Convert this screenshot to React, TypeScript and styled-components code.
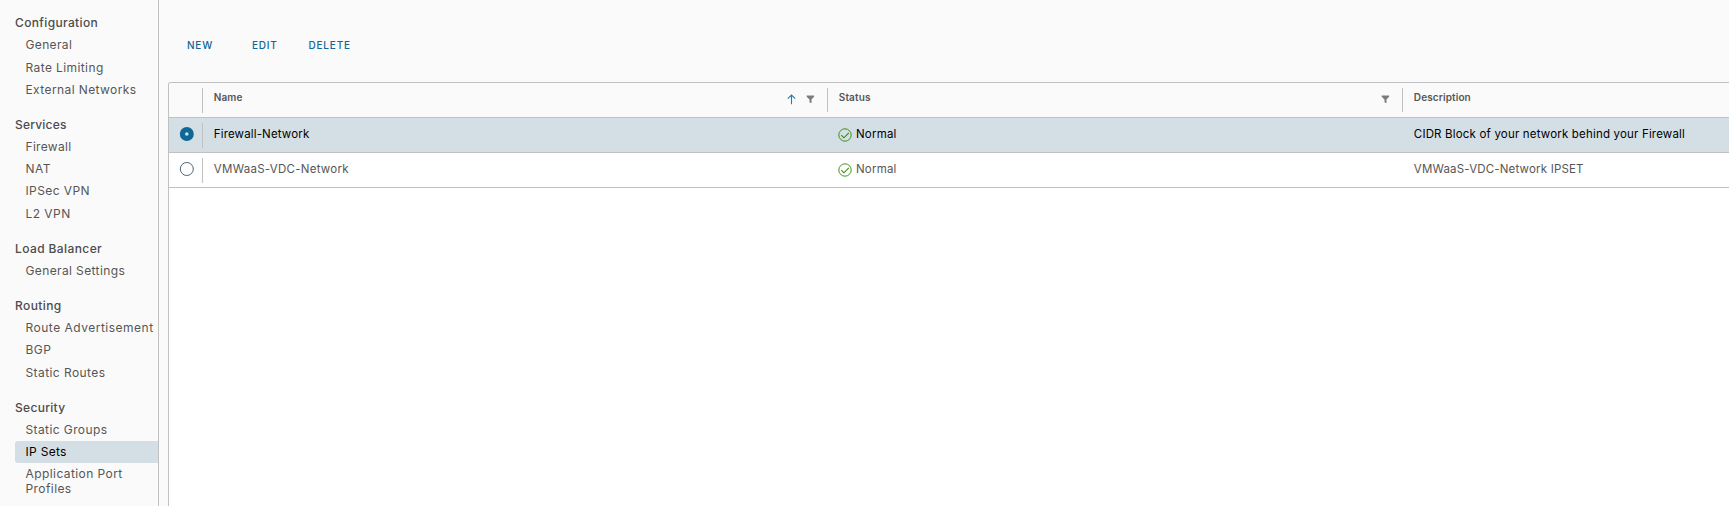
import React from "react";
import styled, { createGlobalStyle } from "styled-components";

const Global = createGlobalStyle`
  * { box-sizing: border-box; }
  body { margin: 0; background: #fafafa; overflow: hidden; }
  body, button { font-family: Inter, "Liberation Sans", sans-serif; }
`;

const Page = styled.div`
  display: flex;
  width: 100%;
  height: 506px;
  overflow: hidden;
  color: #565656;
`;

const Sidebar = styled.nav`
  flex: 0 0 159px;
  padding: 12px 0 0 15px;
  border-right: 1px solid #c1c1c1;
`;

const Group = styled.section`
  margin-bottom: 13px;
`;

const GroupTitle = styled.h4<{ $spacing?: number }>`
  margin: 0;
  height: 22px;
  font-size: 12px;
  line-height: 21px;
  font-weight: 500;
  color: #4c4c4c;
  letter-spacing: ${(p) => p.$spacing ?? 0.3}px;
  white-space: nowrap;
`;

const NavItem = styled.a<{ $active?: boolean; $spacing?: number; $tall?: boolean }>`
  display: block;
  min-height: ${(p) => (p.$tall ? 23 : 22)}px;
  padding: 3px 0 3px 10.5px;
  font-size: 12px;
  line-height: 15px;
  letter-spacing: ${(p) => p.$spacing ?? 0.3}px;
  border-radius: 3px 0 0 3px;
  white-space: pre;
  color: ${(p) => (p.$active ? "#000" : "#565656")};
  background: ${(p) => (p.$active ? "#d4dfe5" : "transparent")};
`;

const Main = styled.main`
  flex: 1;
  min-width: 0;
  display: flex;
  flex-direction: column;
  padding-left: 9px;
`;

const Toolbar = styled.div`
  display: flex;
  height: 82px;
  padding: 37px 0 0 19px;
`;

const Action = styled.button<{ $width: number }>`
  width: ${(p) => p.$width}px;
  height: 16px;
  padding: 0;
  border: 0;
  background: none;
  text-align: left;
  font-size: 10px;
  line-height: 16px;
  font-weight: 500;
  letter-spacing: 0.8px;
  color: #0f6796;
`;

const Grid = styled.div`
  flex: 1;
  border: solid #c1c1c1;
  border-width: 1px 0 0 1px;
  border-top-left-radius: 3px;
  background: #fff;
  overflow: hidden;
`;

const Row = styled.div<{ $kind: "header" | "selected" | "plain" }>`
  display: grid;
  grid-template-columns: 34px 625px 575px 1fr;
  height: 35px;
  border-bottom: 1px solid #c1c1c1;
  font-size: 11.5px;
  color: ${(p) => (p.$kind === "selected" ? "#000" : "#565656")};
  background: ${(p) => ({ header: "#fafafa", selected: "#d4dfe5", plain: "#fff" })[p.$kind]};
`;

const SelectCell = styled.div`
  display: flex;
  align-items: flex-start;
  justify-content: flex-end;
  padding: 9px 8px 0 0;
  background: linear-gradient(#c1c1c1, #c1c1c1) right 5px / 1px 25px no-repeat;
`;

const HeaderCell = styled.div<{ $divided?: boolean }>`
  display: flex;
  justify-content: space-between;
  padding: 4px 0 0 10.8px;
  font-size: 10px;
  line-height: 20px;
  font-weight: 600;
  letter-spacing: 0.12px;
  background: ${(p) =>
    p.$divided ? "linear-gradient(#c1c1c1, #c1c1c1) right 5px / 1px 24px no-repeat" : "none"};
`;

const HeaderIcons = styled.span`
  display: flex;
  gap: 10px;
  padding: 7px 13px 0 0;
`;

const Cell = styled.div<{ $spacing?: number }>`
  display: flex;
  padding: 6px 0 0 10.8px;
  line-height: 20px;
  letter-spacing: ${(p) => p.$spacing ?? 0.2}px;
  white-space: nowrap;
`;

const StatusIcon = styled.svg`
  margin: 4px 4px 0 -0.8px;
  flex: none;
`;

const Radio = ({ checked }: { checked?: boolean }) => (
  <svg width="16" height="15" viewBox="0 0 16 15">
    {checked ? (
      <>
        <circle cx="7.8" cy="7" r="7" fill="#0f6796" />
        <circle cx="7.8" cy="7" r="1.8" fill="#d4dfe5" />
      </>
    ) : (
      <circle cx="7.8" cy="7" r="6.5" fill="#fff" stroke="#4b6574" strokeWidth="1" />
    )}
  </svg>
);

const Check = () => (
  <StatusIcon width="14" height="14" viewBox="0 0 14 14" fill="none" stroke="#318700">
    <circle cx="7" cy="7" r="6.2" strokeWidth=".9" />
    <path d="M3.3 7.2 5.9 9.8 10.8 4.8" strokeWidth="1.05" />
  </StatusIcon>
);

const SortArrow = () => (
  <svg width="9" height="11" viewBox="0 0 9 11" fill="none" stroke="#2a7ba8" strokeWidth="1.1">
    <path d="M4.5 10.2V1.2M.8 4.7 4.5 1l3.7 3.7" />
  </svg>
);

const Filter = () => (
  <svg width="9" height="11" viewBox="0 0 9 11" fill="#7c7c7c">
    <path d="M.7 1.5h7.4v1.2L5.5 5.5v3.7l-2-.9V5.5L.7 2.7z" />
  </svg>
);

type Item = [label: string, spacing?: number, tall?: boolean];
const groups: { title: Item; items: Item[] }[] = [
  { title: ["Configuration", 0.35], items: [["General", 0.35, true], ["Rate Limiting", 0.4], ["External Networks", 0.4]] },
  { title: ["Services", 0.2], items: [["Firewall"], ["NAT", 0.5], ["IPSec VPN", 0.4, true], ["L2 VPN", 0.45]] },
  { title: ["Load Balancer", 0.4], items: [["General Settings", 0.38]] },
  { title: ["Routing", 0.4], items: [["Route Advertisement", 0.5], ["BGP", 0.5, true], ["Static Routes", 0.42]] },
  { title: ["Security"], items: [["Static Groups", 0.4], ["IP Sets"], ["Application Port\nProfiles", 0.42]] },
];

export default function App() {
  return (
    <Page>
      <Global />
      <Sidebar>
        {groups.map(({ title, items }) => (
          <Group key={title[0]}>
            <GroupTitle $spacing={title[1]}>{title[0]}</GroupTitle>
            {items.map(([label, spacing, tall]) => (
              <NavItem key={label} $active={label === "IP Sets"} $spacing={spacing} $tall={tall}>
                {label}
              </NavItem>
            ))}
          </Group>
        ))}
      </Sidebar>
      <Main>
        <Toolbar>
          <Action $width={65}>NEW</Action>
          <Action $width={56.5}>EDIT</Action>
          <Action $width={60}>DELETE</Action>
        </Toolbar>
        <Grid>
          <Row $kind="header">
            <SelectCell />
            <HeaderCell $divided>
              Name
              <HeaderIcons><SortArrow /><Filter /></HeaderIcons>
            </HeaderCell>
            <HeaderCell $divided>
              Status
              <HeaderIcons><Filter /></HeaderIcons>
            </HeaderCell>
            <HeaderCell>Description</HeaderCell>
          </Row>
          <Row $kind="selected">
            <SelectCell><Radio checked /></SelectCell>
            <Cell $spacing={0.15}>Firewall-Network</Cell>
            <Cell><Check />Normal</Cell>
            <Cell $spacing={0.18}>CIDR Block of your network behind your Firewall</Cell>
          </Row>
          <Row $kind="plain">
            <SelectCell><Radio /></SelectCell>
            <Cell $spacing={0.27}>VMWaaS-VDC-Network</Cell>
            <Cell><Check />Normal</Cell>
            <Cell $spacing={0.18}>VMWaaS-VDC-Network IPSET</Cell>
          </Row>
        </Grid>
      </Main>
    </Page>
  );
}
